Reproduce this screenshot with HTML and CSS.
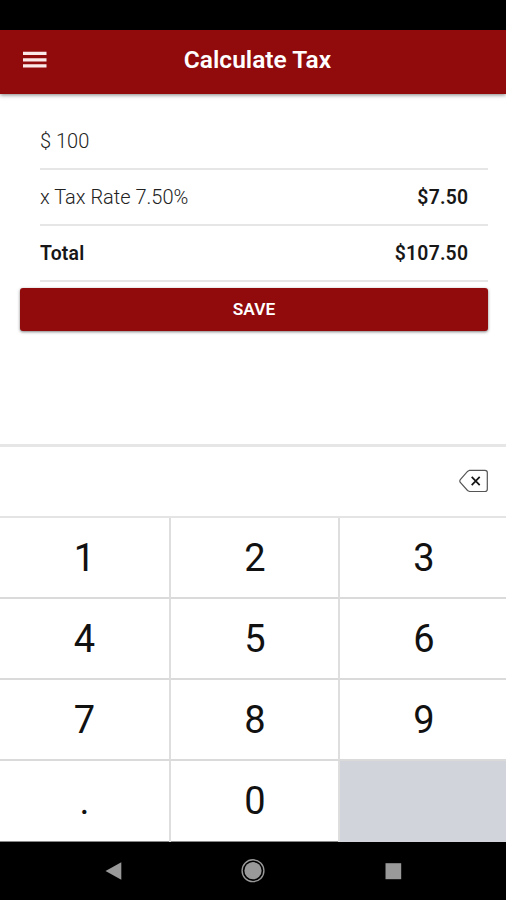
FILE: index.html
```html
<!DOCTYPE html>
<html lang="en">
<head>
<meta charset="utf-8">
<title>Calculate Tax</title>
<link rel="stylesheet" href="styles.css">
</head>
<body>
<div class="status"></div>
<header class="header">
  <svg class="menu" width="24" height="18" viewBox="0 0 24 18"><path d="M0 .8h23.5v3.3H0zM0 7.2h23.5v3.3H0zM0 13.2h23.5v3.3H0z" fill="#fbe9e9"/></svg>
  <h1 class="title">Calculate Tax</h1>
</header>
<main class="content">
  <div class="row"><span>$ 100</span></div>
  <div class="row"><span>x Tax Rate 7.50%</span><span class="strong">$7.50</span></div>
  <div class="row"><span class="strong">Total</span><span class="strong">$107.50</span></div>
  <button class="save">SAVE</button>
</main>
<div class="toolbar">
  <svg width="30" height="24" viewBox="0 0 30 24" fill="none"><path d="M10.5 1.3H26Q28.3 1.3 28.3 3.5V20.3Q28.3 22.5 26 22.5H10.5L8.5 21.5 1.3 13.5Q.3 12 1.3 10.6L8.5 2.4Z" stroke="#555" stroke-width="1.2"/><path d="M12.7 7.8L20.7 16.2M20.7 7.8L12.7 16.2" stroke="#151515" stroke-width="1.7"/></svg>
</div>
<div class="pad">
  <div class="key">1</div><div class="key">2</div><div class="key">3</div>
  <div class="key">4</div><div class="key">5</div><div class="key">6</div>
  <div class="key">7</div><div class="key">8</div><div class="key">9</div>
  <div class="key">.</div><div class="key">0</div><div class="key blank"></div>
</div>
<nav class="nav">
  <svg width="506" height="58" viewBox="0 0 506 58"><path d="M105.5 29L121.3 20.3V37.8Z" fill="#999"/><circle cx="253" cy="28.7" r="10.9" fill="none" stroke="#999" stroke-width="1.4"/><circle cx="253" cy="28.7" r="8.6" fill="#999"/><path d="M385.5 21.2h15.7v16h-15.7z" fill="#999"/></svg>
</nav>
</body>
</html>
```

FILE: styles.css
```css
* { box-sizing: border-box; }
body {
  margin: 0;
  width: 506px;
  height: 900px;
  overflow: hidden;
  display: flex;
  flex-direction: column;
  background: #fff;
  color: #171717;
  font-family: Roboto, sans-serif;
}
.status { height: 30px; background: #000; }
.header {
  height: 64px;
  display: grid;
  grid-template-columns: 130px 1fr 121px;
  align-items: center;
  background: #910a0c;
  box-shadow: 0 1px 4px rgba(0, 0, 0, .5);
}
.menu { margin: -4px 0 0 23px; }
.title {
  margin: 0;
  padding-bottom: 4px;
  text-align: center;
  color: #fff;
  font-size: 24.5px;
  font-weight: 600;
  line-height: 28px;
}
.content { height: 350px; padding: 20px 18px 0 20px; }
.row {
  height: 56px;
  margin-left: 20px;
  padding-right: 20px;
  display: flex;
  align-items: center;
  justify-content: space-between;
  border-bottom: 2px solid #e6e6e6;
  color: #222;
  font-size: 20px;
  font-weight: 300;
}
.strong {
  margin-right: -.2px;
  color: #171717;
  font-size: 19.4px;
  font-weight: 600;
  letter-spacing: .2px;
}
.save {
  display: block;
  width: 468px;
  height: 43px;
  margin-top: 6px;
  padding: 0 0 2px;
  border: 0;
  border-radius: 3px;
  background: #910a0c;
  box-shadow: 0 1px 3px rgba(0, 0, 0, .5);
  color: #fff;
  font: 600 17.3px Roboto, sans-serif;
}
.toolbar {
  height: 74px;
  display: flex;
  align-items: center;
  justify-content: flex-end;
  padding: 0 17px 2px 0;
  border-top: 3px solid #e6e6e6;
  border-bottom: 2px solid #e4e4e4;
}
.pad {
  height: 324px;
  display: grid;
  grid-template: repeat(4, 81px) / 171px 169px 166px;
  border-bottom: 1px solid #888;
}
.key {
  display: flex;
  align-items: center;
  justify-content: center;
  padding-top: 1px;
  border-right: 2px solid #dedede;
  border-bottom: 2px solid #dadada;
  font-size: 38px;
  font-weight: 400;
  color: #111;
}
.key:nth-child(n + 10) { border-bottom: 0; padding: 0 0 2px; }
.key:nth-child(3n + 2) { padding-left: 1px; }
.key:nth-child(3n) { border-right: 0; padding-left: 2px; }
.blank { background: #d1d5db; }
.nav { height: 58px; background: #000; }
.nav svg { display: block; }
```
